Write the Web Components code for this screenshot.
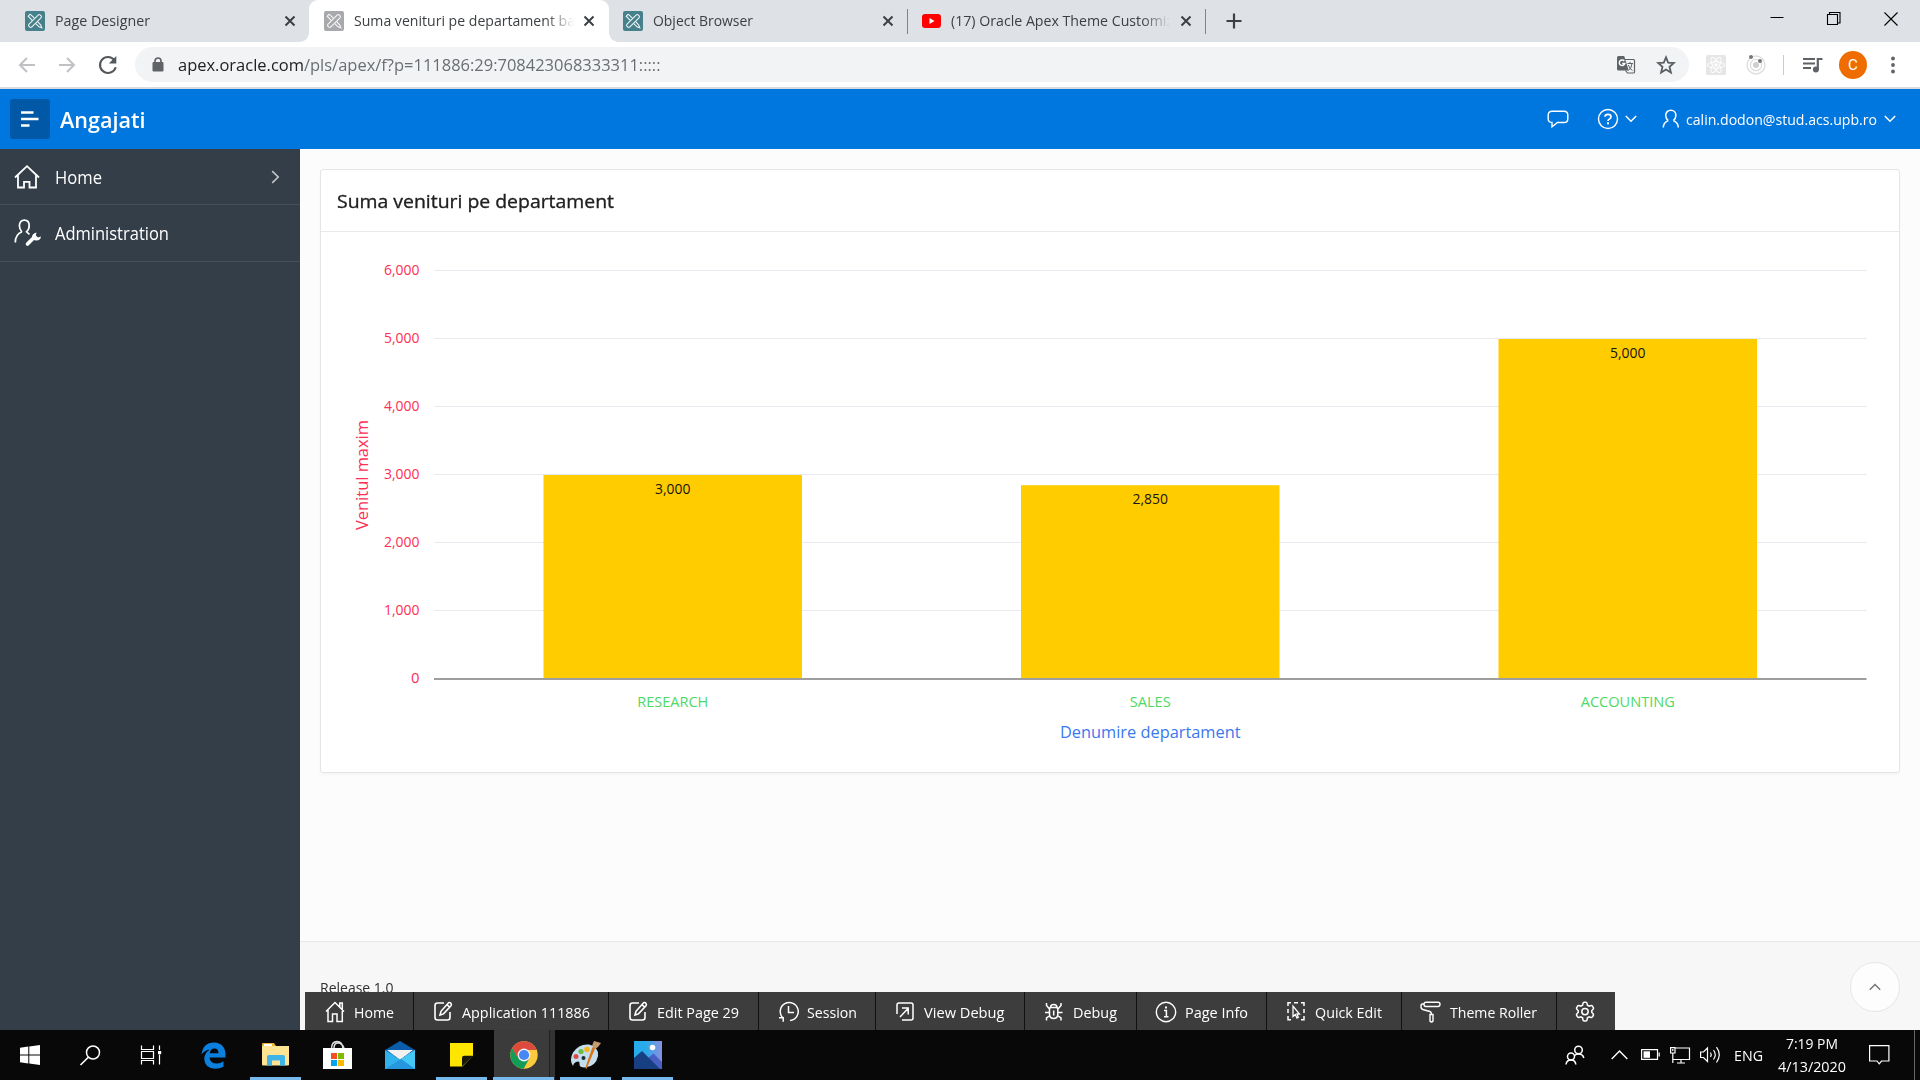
<!DOCTYPE html>
<html lang="en">
<head>
<meta charset="utf-8">
<title>Suma venituri pe departament</title>
<style>
html,body{margin:0;padding:0;background:#fff;overflow:hidden}
body{font-family:"Open Sans","Noto Sans",sans-serif;font-size:15px}
</style>
</head>
<body>
<desktop-screen></desktop-screen>
<script>
const APEX = bg => `<rect width="20" height="20" rx="2" fill="${bg}"/><g fill="none" stroke="#fff" stroke-width="1.1" opacity=".9"><rect x="-2" y="-8" width="4" height="16" rx="1.6" transform="translate(10 10) rotate(45)"/><path d="M5.2 3.2 3.2 5.2 7.2 9.4M10.8 12.6 14 15.8 16.8 16.8 15.8 14 12.6 10.6M9.4 7.2 5.2 3.2M3.2 5.2l1.6-1.6"/></g>`;
const EDIT = `<g fill="none" stroke="#fff" stroke-width="1.6"><path d="M11 2H4.5Q2 2 2 4.5V16.500Q2 19 4.500 19H14.500Q17 19 17 16.500V11"/><path d="M7 14 8 10.300 15.500 1.800Q17 1 18 2.500 18.800 3.600 18 4.700L10.500 12.900ZM14 3.600 16.500 6"/></g>`;
const ICONS = {
 apex:[20,20,APEX('#46808a')],
 apexgray:[20,20,APEX('#a7a9ac')],
 youtube:[19,14,'<rect width="19" height="14" rx="3.200" fill="#f00"/><path d="M7.500 4v6l5-3z" fill="#fff"/>'],
 close:[12,12,'<path d="M1.500 1.500l9 9M10.500 1.500l-9 9" stroke="#3c4043" stroke-width="2"/>'],
 plus:[16,16,'<path d="M8 .5v15M.5 8h15" stroke="#3c4043" stroke-width="2.200"/>'],
 min:[14,14,'<path d="M.5 5.500h13" stroke="#000"/>'],
 restore:[14,14,'<path d="M.5 2.500h10v10H.5zM2.500 2.500V.5h10.500v10.500H11" fill="none" stroke="#000" stroke-width="1.100"/>'],
 winclose:[14,14,'<path d="M.5.5l13 13M13.500.5l-13 13" stroke="#000" stroke-width="1.100"/>'],
 back:[18,16,'<path d="M17 8H2M9 1 2 8l7 7" fill="none" stroke="#bfc1c4" stroke-width="2"/>'],
 fwd:[18,16,'<path d="M1 8h15M9 1l7 7-7 7" fill="none" stroke="#bfc1c4" stroke-width="2"/>'],
 reload:[20,20,'<path d="M16.300 5A8 8 0 1 0 17.700 12.200" fill="none" stroke="#54585d" stroke-width="2.100"/><path d="M18.300 1v7.500h-7.500z" fill="#54585d"/>'],
 lock:[12,15,'<rect x=".5" y="5" width="11" height="9.500" rx="1" fill="#5f6368"/><path d="M3 6V4a3 3 0 0 1 6 0v2" fill="none" stroke="#5f6368" stroke-width="1.700"/>'],
 translate:[20,20,'<path d="M9 4.500H17.500Q18.500 4.500 18.500 5.500V17Q18.500 18 17.500 18H11.500L9.500 15.500" fill="#f1f3f4" stroke="#5f6368" stroke-width="1.200"/><path d="M1 2.500Q1 1 2.500 1H8.200L12.700 15.500H2.500Q1 15.500 1 14Z" fill="#5f6368"/><path d="M8.300 6A2.800 2.800 0 1 0 8.800 8.500H6.200" stroke="#fff" stroke-width="1.400" fill="none"/><path d="M11.500 8.500h5.500M14 7v1.500M12.500 15.500q3-2.500 3.500-7M12.300 10q1.500 4 4.200 5.500" stroke="#5f6368" stroke-width="1" fill="none"/>'],
 star:[20,20,'<path d="M10 2.300 12.200 7.600 17.800 8 13.500 11.800 14.900 17.500 10 14.500 5.100 17.500 6.500 11.800 2.200 8 7.800 7.600Z" fill="none" stroke="#5a5e63" stroke-width="1.800"/>'],
 react:[20,20,'<rect width="20" height="20" rx="1.500" fill="#e6e6e6"/><g fill="none" stroke="#fff" stroke-width=".9"><ellipse cx="10" cy="10" rx="8.500" ry="3.300"/><ellipse cx="10" cy="10" rx="8.500" ry="3.300" transform="rotate(60 10 10)"/><ellipse cx="10" cy="10" rx="8.500" ry="3.300" transform="rotate(120 10 10)"/></g><circle cx="10" cy="10" r="1.800" fill="#fff"/>'],
 orbit:[20,20,'<g fill="none" stroke="#dedede" stroke-width="1.400"><circle cx="10" cy="10" r="9"/><circle cx="10" cy="10" r="5.600"/></g><circle cx="10" cy="10" r="3" fill="#cfcfcf"/><circle cx="5" cy="2" r="2" fill="#777"/><circle cx="14" cy="6" r="2" fill="#777"/>'],
 music:[20,16,'<path d="M0 2h12M0 6.500h12M0 11h8" stroke="#5f6368" stroke-width="2"/><path d="M14.800 12.500V2H19.500" fill="none" stroke="#5f6368" stroke-width="2.200"/><circle cx="12.900" cy="12.500" r="3" fill="#5f6368"/>'],
 dots:[4,18,'<g fill="#5f6368"><circle cx="2" cy="2.500" r="1.900"/><circle cx="2" cy="9" r="1.900"/><circle cx="2" cy="15.500" r="1.900"/></g>'],
 menu:[18,16,'<path d="M0 1.500h12.500M0 8h17.500M0 14.500h8.500" stroke="#fff" stroke-width="2.300"/>'],
 chat:[22,18,'<path d="M5 1.200H17Q20.800 1.200 20.800 5V8.700Q20.800 12.500 17 12.500H10.500L5 16.800V12.500Q1.200 12.500 1.200 8.700V5Q1.200 1.200 5 1.200Z" fill="none" stroke="#fff" stroke-width="1.400"/>'],
 help:[22,22,'<circle cx="11" cy="11" r="9.500" fill="none" stroke="#fff" stroke-width="1.400"/><path d="M8 8.700Q8 6.300 11 6.300T14 8.700Q14 10.200 12.500 10.900 11 11.600 11 13" fill="none" stroke="#fff" stroke-width="1.700"/><rect x="10" y="14.300" width="2" height="2" fill="#fff"/>'],
 chev:[12,8,'<path d="M.8 1 6 6.300 11.200 1" fill="none" stroke="#fff" stroke-width="1.500"/>'],
 user:[18,20,'<path d="M6.300 11.600Q3.700 9.500 3.700 6.300C3.700 3.200 5.900 1.200 8.800 1.200S13.900 3.200 13.900 6.300Q13.900 9.500 11.300 11.600M6.300 11.600Q1.300 13.500 1.300 18.500M11.300 11.600Q16.300 13.500 16.300 18.500" fill="none" stroke="#fff" stroke-width="1.500"/>'],
 home:[26,24,'<path d="M1 12.500 13 1.200 25 12.500M4 10V22.500H10V16.800H15.500V22.500H22V10" fill="none" stroke="#fff" stroke-width="1.800"/>'],
 admin:[28,28,'<path d="M8 12.800Q5.400 10.500 5.400 6.800C5.400 3.300 7.500 1.200 10.300 1.200S15.200 3.300 15.200 6.800Q15.200 10.500 12.500 12.800L15.500 15.300M8 12.800Q1.300 15.500 1.300 23.500" fill="none" stroke="#fff" stroke-width="1.700"/><path d="M13.500 25 19.500 19" stroke="#fff" stroke-width="3.600" stroke-linecap="round"/><path d="M22.500 13.500Q18 14.500 18 18 18.500 21.500 22.500 21.500 26.500 21.500 27 17.500L24 18.500 21.800 16.500Z" fill="#fff"/>'],
 chevr:[9,14,'<path d="M1.200 1.200 7.200 7 1.200 12.800" fill="none" stroke="#c3c7ca" stroke-width="1.600"/>'],
 chevup:[12,8,'<path d="M.8 6.800 6 1.500 11.200 6.800" fill="none" stroke="#707070" stroke-width="1.300"/>'],
 dhome:[20,22,'<path d="M1 10.500 10 1.500 19 10.500M3 9V20.500H7.500V13H12V20.500H17.300V2H14.800V6" fill="none" stroke="#fff" stroke-width="1.500"/>'],
 dedit:[20,21,EDIT],
 dsession:[20,21,'<path d="M4.500 16.500A9 9 0 1 1 12 19.500M1 16.800H5.200V20.800M10.500 5V11.500H16" fill="none" stroke="#fff" stroke-width="1.500"/>'],
 dview:[20,21,'<path d="M2 13V4Q2 2 4 2H16Q18 2 18 4V17Q18 19 16 19H7M5 16 13 7.500M7 7H13.200V13.500" fill="none" stroke="#fff" stroke-width="1.500"/>'],
 ddebug:[20,21,'<path d="M5.500 8Q5.500 6.500 7 6.500H12Q13.800 6.500 13.800 8V13Q13.800 17.500 9.700 17.500T5.500 13ZM6.500 6.500Q6.500 3.500 9.700 3.500T13 6.500M9.700 9.500V14.500M1 11.500H5.500M14 11.500H18.500M2.500 2V4.500L5.500 8M17 2V4.500L14 8M2.500 19.500V17L6 14.500M17 19.500V17L13.500 14.500" fill="none" stroke="#fff" stroke-width="1.500"/>'],
 dinfo:[22,22,'<circle cx="11" cy="11" r="9.700" fill="none" stroke="#fff" stroke-width="1.400"/><path d="M9 9.500H11.400V15.500M9 15.700H13.500" fill="none" stroke="#fff" stroke-width="1.500"/><rect x="10" y="5.500" width="2" height="2" fill="#fff"/>'],
 dquick:[20,21,'<path d="M5 1.800H2V5M8 1.800H12M15 1.800H18V5M18 8V12M18 15V18.800H15M2 8V12M2 15V18.800H5" fill="none" stroke="#fff" stroke-width="1.500"/><path d="M7 5V15.500L9.300 13.500 11 17 12.300 16.200 11 13H13.500Z" fill="none" stroke="#fff" stroke-width="1.300"/>'],
 droller:[21,22,'<path d="M6 1.200H18Q20 1.200 20 3.300T18 5.500H6Q4 5.500 4 3.300T6 1.200ZM4 3H2.500Q1 3 1 5V6Q1 8.200 3.500 8.800L10 10.500Q11.500 11 11.500 13.500M10 13.500H13V20Q11.500 22 10 20Z" fill="none" stroke="#fff" stroke-width="1.400"/>'],
 gear:[22,22,'<path d="M8.800 3Q9 1.300 10.300 1.300H11.700Q13 1.300 13.200 3L13.400 4.200 15.200 5.200 16.400 4.700Q18 4.200 18.600 5.300L19.300 6.500Q19.900 7.700 18.700 8.700L17.800 9.500V11.500L18.700 12.300Q19.900 13.300 19.300 14.500L18.600 15.700Q18 16.800 16.400 16.300L15.200 15.800 13.400 16.800 13.200 18.300Q13 20 11.700 20H10.300Q9 20 8.800 18.300L8.600 16.800 6.800 15.800 5.600 16.300Q4 16.800 3.400 15.700L2.700 14.500Q2.100 13.300 3.300 12.300L4.200 11.500V9.500L3.300 8.700Q2.100 7.700 2.700 6.500L3.400 5.300Q4 4.200 5.600 4.700L6.800 5.200 8.600 4.200Z" fill="none" stroke="#fff" stroke-width="1.500"/><circle cx="11" cy="10.600" r="3.200" fill="none" stroke="#fff" stroke-width="1.500"/>'],
 start:[20,20,'<path d="M0 2.700 8.300 1.500V9.400H0ZM9.300 1.400 20 0V9.400H9.300ZM0 10.500H8.300V18.500L0 17.300ZM9.300 10.500H20V20L9.300 18.600Z" fill="#fff"/>'],
 search:[21,21,'<circle cx="13" cy="7.500" r="6.500" fill="none" stroke="#fff" stroke-width="1.500"/><path d="M8.300 12.200.5 20" stroke="#fff" stroke-width="1.600"/>'],
 taskview:[21,20,'<path d="M.5.5V4.500H12.500V.5M.5 19.500V15.500H12.500V19.500M.5 6.500H12.500V13.500H.5ZM18.500.5V5M18.500 9.500V19.500" fill="none" stroke="#fff" stroke-width="1.200"/><rect x="17" y="6" width="3.200" height="3.200" fill="#fff"/>'],
 edge:[25,27,'<path d="M.5 12.500Q2 .5 13 .5C20.500.5 24.500 6 24.500 12V15.500H8.500Q9 21.500 16 21.500 19.500 21.500 22.500 19.300V24.800Q19 26.800 14 26.800 4 26.500 3.300 17.500 3 11.500 8.800 7.500 3.500 8.300.5 12.500ZM8.700 11.200H17.500Q17.500 6.500 13.500 6.500 9.300 6.500 8.700 11.200Z" fill="#0b80de"/>'],
 folder:[28,24,'<path d="M0 1Q0 0 1 0H12L14 3H0Z" fill="#eab52f"/><path d="M0 3H27V21.500Q27 22.500 26 22.500H1Q0 22.500 0 21.500Z" fill="#ffe493"/><rect x="2" y="1" width="8" height="2" fill="#fff"/><path d="M5 22.500V14Q5 12 7 12H21Q23 12 23 14V22.500H18V17.500H10V22.500Z" fill="#3fb4e8"/>'],
 store:[29,30,'<path d="M8.500 9Q8.500 1.500 14 1.500T20 9M11 8Q11 3 15 3T21 8" fill="none" stroke="#ddd" stroke-width="1.500"/><path d="M0 8H29V29H0Z" fill="#fff"/><path d="M8 13h6v6H8z" fill="#f25022"/><path d="M15 13h6v6h-6z" fill="#7fba00"/><path d="M8 20h6v6H8z" fill="#00a4ef"/><path d="M15 20h6v6h-6z" fill="#ffb900"/>'],
 mail:[30,29,'<path d="M0 9 15 0 30 9V15H0Z" fill="#0b5cab"/><path d="M2 9H28L15 19Z" fill="#f1f1f1"/><path d="M0 9 15 18.500 30 9V28H0Z" fill="#30b3ec"/><path d="M16 18 30 9V28Z" fill="#45c8f5"/><path d="M0 28 16 18 30 28Z" fill="#2697df"/>'],
 notes:[23,24,'<path d="M0 0H23V12.500L12.500 23.500H0Z" fill="#ffe600"/><path d="M12 23.500V15Q12 12.800 14.200 12.800H23Z" fill="#17160a"/>'],
 chrome:[28,28,'<circle cx="14" cy="14" r="13.700" fill="#fccb3d"/><path d="M2.100 7.100A13.700 13.700 0 0 0 13.600 27.700L19.500 17.200 8.500 17.200Z" fill="#139c58"/><path d="M2.100 7.100 8.100 17.500 14 9H26.700L25.900 7.200A13.700 13.700 0 0 0 2.100 7.100Z" fill="#dd4b3e"/><circle cx="14" cy="14" r="6.400" fill="#f1f1f1"/><circle cx="14" cy="14" r="5.100" fill="#4587f3"/>'],
 paint:[31,30,'<path d="M3 26Q-1 20 3 12.500 9 3.500 19 4.500 29 6.500 28 16 26 26.500 15 27.500 9 27.500 9.500 24 10 20.500 6 22 3.500 23 3 26Z" fill="#c5deee"/><circle cx="6" cy="16.500" r="2.500" fill="#dd4a42"/><circle cx="11" cy="11.500" r="2.600" fill="#69bd45"/><circle cx="17" cy="9.500" r="2.700" fill="#fbb31c"/><circle cx="13.500" cy="18" r="2" fill="#1c2c38"/><path d="M25.500 6 22 14 16 28.500 19 19 23 8Z" fill="#e48825" stroke="#d9771c" stroke-width="1.500"/><path d="M22 5.500 24 1 31 3 28 7 25 9Z" fill="#c49b6e"/>'],
 photos:[28,28,'<defs><linearGradient id="p"><stop offset=".4" stop-color="#28abea"/><stop offset="1" stop-color="#8c8fe0"/></linearGradient></defs><rect width="28" height="28" fill="url(#p)"/><path d="M14 17 19.500 12.500 28 21V28H14Z" fill="#4a5fc4"/><path d="M0 17 8 10 26 28H0Z" fill="#173f82"/><circle cx="18.500" cy="6.500" r="2.800" fill="#fff"/>'],
 people:[20,20,'<g fill="none" stroke="#fff" stroke-width="1.500"><circle cx="13.500" cy="5" r="3.800"/><circle cx="6" cy="11.500" r="3.500"/><path d="M1 19.500Q1.500 15 6 15T10.800 19.500M9.500 10.500Q11 9 13.500 9 18 9 18.800 13"/></g>'],
 trayup:[17,10,'<path d="M.7 9 8.500 1 16.300 9" fill="none" stroke="#fff" stroke-width="1.400"/>'],
 battery:[19,12,'<path d="M.6.600H16.500V10.400H.6ZM18.200 3.500V7.500" fill="none" stroke="#fff" stroke-width="1.200"/><rect x="2.500" y="2.300" width="6.500" height="6.500" fill="#fff"/>'],
 network:[21,17,'<path d="M5 1H19.500V12.500H3M11 12.500V16M7 16H15M.6.600H5V6H.6ZM2.800 6V16M2.800 2V4" fill="none" stroke="#fff" stroke-width="1.200"/>'],
 sound:[21,18,'<path d="M.6 6H3.500L7.500 2V15.500L3.500 11.500H.6ZM10.500 6.500Q12 8.700 10.500 11M13.500 4Q17 8.700 13.500 13.500M16.500 1.200Q22 8.700 16.500 16.500" fill="none" stroke="#fff" stroke-width="1.200"/>'],
 notif:[21,20,'<path d="M.6.600H19.900V16H12.500L10.200 18.800 8 16H.6Z" fill="none" stroke="#fff" stroke-width="1.200"/>']
};

function define(name, html, setup){
  const tpl = document.createElement('template');
  tpl.innerHTML = html;
  customElements.define(name, class extends HTMLElement{
    constructor(){ super(); this.attachShadow({mode:'open'}); }
    connectedCallback(){
      if(this.shadowRoot.childNodes.length) return;
      const frag = document.importNode(tpl.content, true);
      if(setup) setup(this, frag);
      this.shadowRoot.append(frag);
      if(this.ready) this.ready();
    }
  });
}
const spacing = el => { if(el.hasAttribute('gap')) el.style.marginLeft = el.getAttribute('gap')+'px'; };

// <ui-icon name gap>: inline SVG at its natural size
define('ui-icon', '<style>:host{display:block;flex:none}svg{display:block;overflow:visible}</style>', (el, f)=>{
  const [w,h,body] = ICONS[el.getAttribute('name')];
  spacing(el);
  const d = document.createElement('div');
  d.innerHTML = `<svg width="${w}" height="${h}" viewBox="0 0 ${w} ${h}">${body}</svg>`;
  f.append(d.firstChild);
});

// <fit-text w size gap>: one line of text condensed to a set width
define('fit-text', '<style>:host{display:block;flex:none;white-space:nowrap;line-height:20px}span{display:inline-block;transform-origin:0 50%}</style><span><slot></slot></span>', (el, f)=>{
  spacing(el);
  const w = +el.getAttribute('w'), span = f.querySelector('span');
  el.style.width = w+'px';
  if(el.hasAttribute('size')) el.style.fontSize = el.getAttribute('size')+'px';
  el.ready = () => { const n = span.getBoundingClientRect().width; if(n) span.style.transform = `scaleX(${w/n})`; };
});

define('browser-tab', `<style>
:host{display:flex;align-items:center;height:42px;box-sizing:border-box;flex:none;color:#3c4043;position:relative}
:host([active]){background:#fff;border-radius:9px 9px 0 0}
:host([active])::before,:host([active])::after{content:"";position:absolute;bottom:0;width:9px;height:9px}
:host([active])::before{left:-9px;background:radial-gradient(circle at 0 0,transparent 8.5px,#fff 9px)}
:host([active])::after{right:-9px;background:radial-gradient(circle at 100% 0,transparent 8.5px,#fff 9px)}
.t{overflow:hidden;flex:none;padding-bottom:2px}
:host([fade]) .t{-webkit-mask-image:linear-gradient(90deg,#000 calc(100% - 28px),transparent)}
</style><ui-icon></ui-icon><div class="t"><slot></slot></div><ui-icon name="close"></ui-icon>`, (el, f)=>{
  el.style.width = el.getAttribute('width')+'px';
  const [a,b] = f.querySelectorAll('ui-icon'), t = f.querySelector('.t');
  a.setAttribute('name', el.getAttribute('icon'));
  a.style.marginLeft = el.getAttribute('lead')+'px';
  t.style.marginLeft = '10px';
  t.style.width = el.getAttribute('text')+'px';
  b.style.marginLeft = 'auto'; b.style.marginRight = (el.getAttribute('trail')||15)+'px';
});

define('browser-chrome', `<style>
:host{display:block;height:87px;border-bottom:2px solid #d9dbde}
.tabs{height:42px;background:#dee1e6;display:flex;align-items:center}
.sep{width:1px;height:25px;background:#808388;flex:none}
.bar{height:45px;background:#fff;display:flex;align-items:center;box-sizing:border-box;padding-left:18px}
.omni{width:1554px;height:35px;border-radius:18px;background:#f1f3f4;display:flex;align-items:center;margin-left:17px;flex:none}
b{font-weight:400;color:#202124}
.url{color:#6a6e73}
.line{width:1px;height:20px;background:#c9cbce;margin-left:17px}
.av{width:28px;height:28px;border-radius:50%;background:#ef6c00;color:#fff;display:flex;align-items:center;justify-content:center;font:15px Roboto,sans-serif;margin-left:16px}
.win{display:flex;margin-left:auto;align-self:flex-start;padding:12px 22px 0 0;gap:43px}
</style>
<div class="tabs">
<browser-tab width="309" icon="apex" lead="25" text="220" trail="13"><fit-text w="95" size="15">Page Designer</fit-text></browser-tab>
<browser-tab width="300" icon="apexgray" lead="15" text="220" trail="14.500" active fade><fit-text w="221" size="15">Suma venituri pe departament ba</fit-text></browser-tab>
<browser-tab width="298" icon="apex" lead="14" text="210" trail="13.500"><fit-text w="100" size="15">Object Browser</fit-text></browser-tab>
<div class="sep"></div>
<browser-tab width="297" icon="youtube" lead="14" text="219" trail="13" fade><fit-text w="222" size="15">(17) Oracle Apex Theme Customiz</fit-text></browser-tab>
<div class="sep"></div>
<ui-icon name="plus" gap="19.500"></ui-icon>
<div class="win"><ui-icon name="min"></ui-icon><ui-icon name="restore"></ui-icon><ui-icon name="winclose"></ui-icon></div>
</div>
<div class="bar">
<ui-icon name="back"></ui-icon><ui-icon name="fwd" gap="22"></ui-icon><ui-icon name="reload" gap="22"></ui-icon>
<div class="omni"><ui-icon name="lock" gap="16.500"></ui-icon><fit-text class="url" w="482.500" size="16.6" gap="14"><b>apex.oracle.com</b>/pls/apex/f?p=111886:29:708423068333311:::::</fit-text>
<ui-icon name="translate" style="margin-left:auto"></ui-icon><ui-icon name="star" gap="20" style="margin-right:13px"></ui-icon></div>
<ui-icon name="react" gap="17"></ui-icon><ui-icon name="orbit" gap="20"></ui-icon><div class="line"></div>
<ui-icon name="music" gap="19"></ui-icon><div class="av">C</div><ui-icon name="dots" gap="23.500"></ui-icon>
</div>`);

define('app-header', `<style>
:host{display:flex;height:60px;background:#0076df;color:#fff;align-items:center;box-sizing:border-box;padding:0 24px 0 10px}
.m{width:40px;height:40px;background:#0058a7;border-radius:3px;display:flex;align-items:center;justify-content:center}
</style><div class="m"><ui-icon name="menu"></ui-icon></div><fit-text w="85.500" size="21.5" gap="10" style="font-weight:600;padding-top:1px">Angajati</fit-text>
<ui-icon name="chat" style="margin-left:auto"></ui-icon><ui-icon name="help" gap="28"></ui-icon><ui-icon name="chev" gap="6"></ui-icon>
<ui-icon name="user" gap="24.500"></ui-icon><fit-text w="191" size="15.2" gap="6">calin.dodon@stud.acs.upb.ro</fit-text><ui-icon name="chev" gap="7.500"></ui-icon>`);

define('nav-item', `<style>
:host{display:flex;align-items:center;box-sizing:border-box;height:56px;border-bottom:1px solid #44505a;color:#fff;font-size:17.500px}
.i{width:28px;margin-left:14px;flex:none}
::slotted(fit-text){margin-left:13px;padding-top:1px}
</style><div class="i"><ui-icon></ui-icon></div><slot></slot><slot name="end"></slot>`, (el,f)=>f.querySelector('ui-icon').setAttribute('name', el.getAttribute('icon')));

define('side-nav', `<style>:host{display:block;width:300px;flex:none;background:#333e48}</style>
<nav-item icon="home"><fit-text w="47">Home</fit-text><ui-icon slot="end" name="chevr" style="margin-left:169px"></ui-icon></nav-item>
<nav-item icon="admin" style="height:57px"><fit-text w="114" style="padding-top:0">Administration</fit-text></nav-item>`);

// bar chart: values and category names come from the data attribute
define('bar-chart', '<style>:host{display:block}svg{display:block;font-family:"Open Sans","Noto Sans",sans-serif}</style>', (el, f)=>{
  const data = JSON.parse(el.getAttribute('data')), W=1578, H=540, L=113, R=1545.500, top=38.500, zero=447, step=68;
  const text = (x,base,w,s,fill,t,anchor='middle',size=15)=>`<text x="${x}" y="${base}" textLength="${w}" lengthAdjust="spacingAndGlyphs" font-size="${size}" text-anchor="${anchor}" fill="${fill}"${s}>${t}</text>`;
  let s='';
  for(let i=0;i<=6;i++){
    const y = top+(6-i)*step, v=i*1000;
    if(i) s+=`<path d="M${L} ${y}H${R}" stroke="#e8e8ee"/>`;
    s+=text(98.500, y+4.500, v?35.500:8.500, '', '#ff2d55', v.toLocaleString('en-US'),'end');
  }
  const cw=(R-L)/data.length, bw=258.500;
  data.forEach((d,i)=>{
    const c=L+cw*(i+.5), h=d.v/1000*step;
    s+=`<rect x="${c-bw/2}" y="${zero-h}" width="${bw}" height="${h}" fill="#ffcc00"/>`;
    s+=text(c, zero-h+19, 35.500,'','#161513',d.v.toLocaleString('en-US'));
    s+=text(c, 475, d.w,'','#4cd964',d.n);
  });
  s+=`<path d="M${L} ${zero}H${R}" stroke="#9e9e9e" stroke-width="2"/>`;
  s+=text((L+R)/2, 505.500, 180.500,'','#3a78f0','Denumire departament','middle',17);
  s+=text(0,0,110,' transform="translate(47 243) rotate(-90)"','#ff2d55','Venitul maxim','middle',17);
  const d=document.createElement('div');
  d.innerHTML=`<svg width="${W}" height="${H}" viewBox="0 0 ${W} ${H}">${s}</svg>`;
  f.append(d.firstChild);
});

define('card-region', `<style>
:host{display:block;box-sizing:border-box;border:1px solid #e5e5e5;border-radius:3px;background:#fff;box-shadow:0 2px 3px rgba(0,0,0,.03)}
header{height:61px;border-bottom:1px solid #e9e9e9;display:flex;align-items:center;padding-left:15.500px;color:#202020;-webkit-text-stroke:.35px #202020}
</style><header><slot name="title"></slot></header><slot></slot>`);

define('dev-button', `<style>
:host{display:flex;align-items:center;flex:none;box-sizing:border-box;height:38px;padding-left:19px;background:#3d3d3d;color:#fff;border-right:1.500px solid #111}
:host(:last-child){border:0}
.i{width:29px;flex:none;padding-top:1px}
::slotted(fit-text){padding-top:2px}
</style><div class="i"><ui-icon></ui-icon></div><slot></slot>`, (el,f)=>{ el.style.width=el.getAttribute('width')+'px'; f.querySelector('ui-icon').setAttribute('name', el.getAttribute('icon')); });

define('dev-toolbar', `<style>:host{display:flex;width:1310px;height:38px;font-size:15px}</style>
<dev-button width="109" icon="dhome" style="padding-left:19.500px"><fit-text w="40">Home</fit-text></dev-button>
<dev-button width="195" icon="dedit"><fit-text w="128">Application 111886</fit-text></dev-button>
<dev-button width="149.500" icon="dedit"><fit-text w="82">Edit Page 29</fit-text></dev-button>
<dev-button width="117" icon="dsession"><fit-text w="50">Session</fit-text></dev-button>
<dev-button width="149" icon="dview"><fit-text w="80.500">View Debug</fit-text></dev-button>
<dev-button width="112.500" icon="ddebug"><fit-text w="44">Debug</fit-text></dev-button>
<dev-button width="130" icon="dinfo" style="padding-left:18px"><fit-text w="63" gap="1">Page Info</fit-text></dev-button>
<dev-button width="134.500" icon="dquick"><fit-text w="67">Quick Edit</fit-text></dev-button>
<dev-button width="155" icon="droller" style="padding-left:18.500px"><fit-text w="87" gap=".5">Theme Roller</fit-text></dev-button>
<dev-button width="58.500" icon="gear" style="padding-left:17.500px"></dev-button>`);

define('page-content', `<style>
:host{display:flex;flex-direction:column;flex:1;background:#fcfcfc;position:relative}
card-region{margin:20px 20px 0;height:604px}
fit-text[slot]{font-size:19px}
footer{margin-top:auto;height:89px;box-sizing:border-box;border-top:1px solid #e8e8e8;background:#f7f7f7;padding:35px 20px 0;color:#303030}
dev-toolbar{position:absolute;left:5px;bottom:0}
.top{position:absolute;right:20px;bottom:18px;width:50px;height:50px;box-sizing:border-box;border:1px solid #e6e6e6;border-radius:50%;background:#fdfdfd;display:flex;align-items:center;justify-content:center}
</style>
<card-region><fit-text slot="title" w="277">Suma venituri pe departament</fit-text>
<bar-chart data='[{"n":"RESEARCH","v":3000,"w":71},{"n":"SALES","v":2850,"w":41},{"n":"ACCOUNTING","v":5000,"w":94}]'></bar-chart></card-region>
<footer><fit-text w="73.500" size="15">Release 1.0</fit-text></footer>
<div class="top"><ui-icon name="chevup"></ui-icon></div>
<dev-toolbar></dev-toolbar>`);

define('task-button', `<style>
:host{display:flex;width:62px;height:50px;align-items:center;justify-content:center;position:relative;flex:none}
:host([sys]){width:60px}
:host([open])::after{content:"";position:absolute;left:50%;bottom:0;width:51px;height:3px;margin-left:-25.500px;background:#76b9ed}
:host([current]){background:linear-gradient(90deg,transparent .5px,#3b3b3b .5px,#3b3b3b 56px,#202020 56px,#202020 57px,#333 57px,#333 61.500px,transparent 61.500px)}
:host([current])::after{width:61px;margin-left:-30.500px}
</style><ui-icon></ui-icon>`, (el,f)=>f.querySelector('ui-icon').setAttribute('name', el.getAttribute('icon')));

define('task-bar', `<style>
:host{display:flex;height:50px;background:#080808;color:#fff;align-items:center}
.tray{margin-left:auto;display:flex;align-items:center;padding-right:5.500px}
.clock{display:flex;flex-direction:column;align-items:center;width:70px;margin-left:14.500px;gap:3px;padding-bottom:2px}
.show{width:1px;height:50px;background:#666;margin-left:24px}
</style>
<task-button sys icon="start"></task-button><task-button sys icon="search"></task-button><task-button sys icon="taskview" style="width:62.500px"></task-button>
<task-button icon="edge"></task-button><task-button icon="folder" open></task-button><task-button icon="store"></task-button><task-button icon="mail"></task-button>
<task-button icon="notes" open></task-button><task-button icon="chrome" open current></task-button><task-button icon="paint" open></task-button><task-button icon="photos" open></task-button>
<div class="tray"><ui-icon name="people"></ui-icon><ui-icon name="trayup" gap="26"></ui-icon><ui-icon name="battery" gap="12.500"></ui-icon><ui-icon name="network" gap="10"></ui-icon><ui-icon name="sound" gap="9"></ui-icon>
<fit-text w="29" size="15.2" gap="13">ENG</fit-text>
<div class="clock"><fit-text w="52" size="15.2">7:19 PM</fit-text><fit-text w="68" size="15.2">4/13/2020</fit-text></div>
<ui-icon name="notif" gap="21.500"></ui-icon><div class="show"></div></div>`);

define('desktop-screen', `<style>
:host{display:flex;flex-direction:column;width:1920px;height:1084px;background:#fff}
main{display:flex;height:881px}
</style><browser-chrome></browser-chrome><app-header></app-header><main><side-nav></side-nav><page-content></page-content></main><task-bar></task-bar>`);
</script>
</body>
</html>
